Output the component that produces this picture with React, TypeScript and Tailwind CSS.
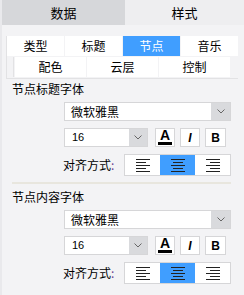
import React from 'react';

const Chevron = () => (
  <svg width="8" height="5" viewBox="0 0 8 5" fill="none">
    <path d="M0.5 0.5L4 4L7.5 0.5" stroke="#666" strokeWidth="1" />
  </svg>
);

function AlignIcon({ kind }: { kind: 'left' | 'center' | 'right' }) {
  const rows = [14, 10, 14, 10, 14];
  return (
    <svg width="14" height="13" viewBox="0 0 14 13">
      {rows.map((w, i) => {
        const x = kind === 'left' ? 0 : kind === 'right' ? 14 - w : (14 - w) / 2;
        return <rect key={i} x={x} y={i * 3} width={w} height="1" fill="#222" />;
      })}
    </svg>
  );
}

function FontSection({ title }: { title: string }) {
  return (
    <div className="pl-[10px] pr-[13px]">
      <div className="h-[16px] leading-[16px]">{title}</div>

      {/* font family */}
      <div className="mt-[5px] ml-[52px] h-[19px] flex bg-white border border-[#d6d6d8]">
        <div className="flex-1 pl-[6px] leading-[17px]">微软雅黑</div>
        <div className="w-[19px] bg-[#d9dadd] flex items-center justify-center">
          <Chevron />
        </div>
      </div>

      {/* size + style buttons */}
      <div className="mt-[7px] ml-[52px] h-[19px] flex">
        <div className="w-[84px] flex bg-white border border-[#d6d6d8]">
          <div className="flex-1 pl-[7px] text-[11px] leading-[17px] font-['Liberation_Sans',sans-serif]">16</div>
          <div className="w-[18px] bg-[#d9dadd] flex items-center justify-center">
            <Chevron />
          </div>
        </div>
        <div className="ml-[7px] flex gap-[5px]">
          <div className="w-[20px] bg-white border border-[#d6d6d8] flex flex-col items-center justify-center">
            <span className="text-[14px] leading-[11px] font-bold font-['Liberation_Sans',sans-serif]">A</span>
            <span className="mt-[1px] w-[14px] h-[3px] bg-black" />
          </div>
          <div className="w-[20px] bg-white border border-[#d6d6d8] flex items-center justify-center text-[12px] italic font-bold font-['Liberation_Sans',sans-serif]">
            I
          </div>
          <div className="w-[21px] bg-white border border-[#d6d6d8] flex items-center justify-center text-[12px] font-bold font-['Liberation_Sans',sans-serif]">
            B
          </div>
        </div>
      </div>

      {/* alignment */}
      <div className="mt-[7px] flex items-center">
        <div className="ml-[51px] w-[61px]">
          对齐方式<span className="text-[#6b3f8f]">:</span>
        </div>
        <div className="flex h-[22px] w-[107px] border border-[#d6d6d8] bg-white">
          <div className="flex-1 flex items-center justify-center">
            <AlignIcon kind="left" />
          </div>
          <div className="flex-1 flex items-center justify-center bg-[#409eff]">
            <AlignIcon kind="center" />
          </div>
          <div className="flex-1 flex items-center justify-center">
            <AlignIcon kind="right" />
          </div>
        </div>
      </div>
    </div>
  );
}

export default function App() {
  const row1 = ['类型', '标题', '节点', '音乐'];
  const row2 = ['配色', '云层', '控制'];

  return (
    <div className="w-[244px] h-[295px] overflow-hidden bg-[#f3f3f5] border-l-2 border-[#e9e9ec] text-[12px] text-black font-['Noto_Sans_CJK_SC',sans-serif]">
      {/* top tabs */}
      <div className="flex h-[25px]">
        <div className="w-[123px] bg-[#d6d7da] flex items-center justify-center text-[13px]">数据</div>
        <div className="flex-1 bg-[#eeeef0] flex items-center justify-center text-[13px]">样式</div>
      </div>

      {/* sub tabs */}
      <div className="mt-[11px] ml-[4px] w-[232px] border-l border-b border-[#e2e2e4] pb-[1px]">
        <div className="grid grid-cols-4 gap-px h-[20px]">
          {row1.map((t) => (
            <div
              key={t}
              className={
                t === '节点'
                  ? 'bg-[#409eff] text-white flex items-center justify-center'
                  : 'bg-white flex items-center justify-center'
              }
            >
              {t}
            </div>
          ))}
        </div>
        <div className="mt-px ml-[6px] w-[217px] pl-[1px] border-l border-[#e2e2e4] grid grid-cols-3 gap-px h-[20px]">
          {row2.map((t) => (
            <div key={t} className="bg-white flex items-center justify-center">
              {t}
            </div>
          ))}
        </div>
      </div>

      <div className="mt-[2px]">
        <FontSection title="节点标题字体" />
      </div>

      <div className="mt-[6px] ml-[10px] mr-[13px] h-[2px] bg-[#e8e6de]" />

      <div className="mt-[5px]">
        <FontSection title="节点内容字体" />
      </div>
    </div>
  );
}
